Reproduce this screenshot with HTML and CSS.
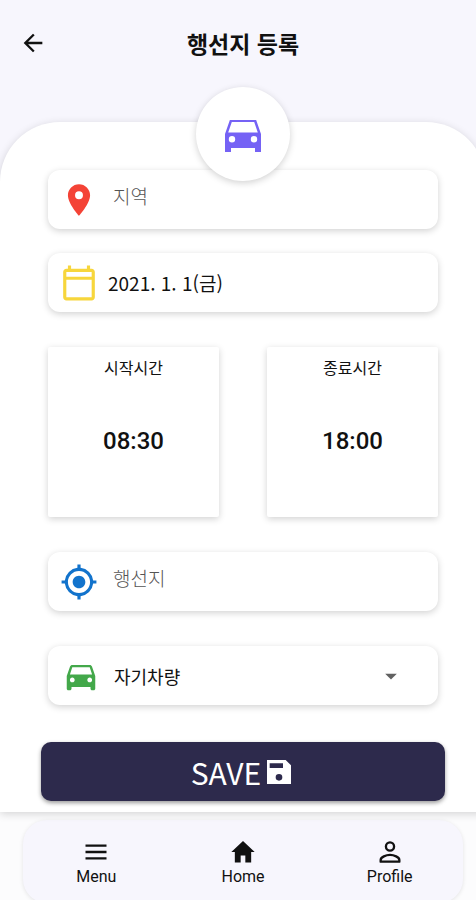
FILE: index.html
```html
<!DOCTYPE html>
<html lang="ko">
<head>
<meta charset="utf-8">
<meta name="viewport" content="width=device-width, initial-scale=1">
<title>행선지 등록</title>
<link rel="stylesheet" href="styles.css">
</head>
<body>
<div class="app">
  <div class="screen">
    <header class="topbar">
      <button class="back" type="button" aria-label="Back">
        <svg class="icon icon-sm" viewBox="0 0 24 24"><path d="M20 11H7.83l5.59-5.59L12 4l-8 8 8 8 1.41-1.41L7.83 13H20v-2z"/></svg>
      </button>
      <h1 class="title">행선지 등록</h1>
    </header>

    <main class="sheet">
      <div class="badge">
        <svg class="icon icon-xl" viewBox="0 0 24 24"><path fill-rule="evenodd" d="M18.58 5H5.43L3 12v9h3v-2h12v2h3v-9l-2.42-7zM6.5 16.2a1.6 1.6 0 1 1 0-3.2 1.6 1.6 0 0 1 0 3.2zm11 0a1.6 1.6 0 1 1 0-3.2 1.6 1.6 0 0 1 0 3.2zM4.600 11.300L6.400 6h11.200l1.800 5.300z"/></svg>
      </div>
      <form class="form">
        <div class="pair">
          <label class="card field">
            <svg class="icon icon-lg red" viewBox="0 0 24 24"><path d="M12 2C8.13 2 5 5.13 5 9c0 5.25 7 13 7 13s7-7.75 7-13c0-3.87-3.13-7-7-7zm0 9.5a2.5 2.5 0 0 1 0-5 2.5 2.5 0 0 1 0 5z"/></svg>
            <input class="text" type="text" placeholder="지역" aria-label="지역">
          </label>
          <button class="card field date" type="button">
            <svg class="icon icon-lg yellow" viewBox="0 0 24 24"><path d="M20 3h-1V1h-2v2H7V1H5v2H4c-1.1 0-2 .9-2 2v16c0 1.1.9 2 2 2h16c1.1 0 2-.9 2-2V5c0-1.1-.9-2-2-2zm0 2v3H4V5h16zM4 21V10h16v11H4z"/></svg>
            <span>2021. 1. 1(금)</span>
          </button>
        </div>

        <div class="times">
          <button class="time" type="button">
            <span class="time-label">시작시간</span>
            <span class="time-value">08:30</span>
          </button>
          <button class="time" type="button">
            <span class="time-label">종료시간</span>
            <span class="time-value">18:00</span>
          </button>
        </div>

        <label class="card field">
          <svg class="icon icon-lg blue" viewBox="0 0 24 24"><path d="M12 8c-2.21 0-4 1.79-4 4s1.79 4 4 4 4-1.79 4-4-1.79-4-4-4zm8.94 3A8.99 8.99 0 0 0 13 3.06V1h-2v2.06A8.99 8.99 0 0 0 3.06 11H1v2h2.06A8.99 8.99 0 0 0 11 20.94V23h2v-2.06A8.99 8.99 0 0 0 20.94 13H23v-2h-2.06zM12 19c-3.87 0-7-3.13-7-7s3.13-7 7-7 7 3.13 7 7-3.13 7-7 7z"/></svg>
          <input class="text" type="text" placeholder="행선지" aria-label="행선지">
        </label>

        <label class="card field vehicle">
          <svg class="icon icon-lg green" viewBox="0 0 24 24"><path d="M18.92 6.01C18.72 5.42 18.16 5 17.5 5h-11c-.66 0-1.21.42-1.42 1.01L3 12v8c0 .55.45 1 1 1h1c.55 0 1-.45 1-1v-1h12v1c0 .55.45 1 1 1h1c.55 0 1-.45 1-1v-8l-2.08-5.99zM6.5 16c-.83 0-1.5-.67-1.5-1.5S5.67 13 6.5 13s1.5.67 1.5 1.5S7.33 16 6.5 16zm11 0c-.83 0-1.5-.67-1.5-1.5s.67-1.5 1.5-1.5 1.5.67 1.5 1.5-.67 1.5-1.5 1.5zM5 11l1.5-4.5h11L19 11H5z"/></svg>
          <select class="select" aria-label="차량">
            <option>자기차량</option>
          </select>
          <svg class="icon icon-sm grey" viewBox="0 0 24 24"><path d="M7 10l5 5 5-5z"/></svg>
        </label>

        <button class="save" type="button">
          <span>SAVE</span>
          <svg class="icon icon-md" viewBox="0 0 24 24"><path d="M17 3H3v18h18V7l-4-4zm-5 15.500a2.500 2.500 0 1 1 0-5 2.500 2.500 0 0 1 0 5zM15 9H5V5.500h10V9z"/></svg>
        </button>
      </form>
    </main>

    <nav class="nav">
      <a class="nav-item" href="#menu">
        <svg class="icon icon-sm" viewBox="0 0 24 24"><path d="M3 18.500h18v-2H3v2zm0-5.500h18v-2H3v2zm0-7.500v2h18v-2H3z"/></svg>
        <span>Menu</span>
      </a>
      <a class="nav-item" href="#home">
        <svg class="icon icon-sm" viewBox="0 0 24 24"><path d="M10 21v-6h4v6h5v-9h3L12 2.5 2 12h3v9z"/></svg>
        <span>Home</span>
      </a>
      <a class="nav-item" href="#profile">
        <svg class="icon icon-sm" viewBox="0 0 24 24"><path fill="none" stroke="currentColor" stroke-width="2" stroke-linejoin="round" d="M12 3.800a3.500 3.500 0 1 1 0 7 3.500 3.500 0 0 1 0-7zM4 20.300v-1.500c0-2.500 4.700-4.300 8-4.300s8 1.800 8 4.300v1.500z"/></svg>
        <span>Profile</span>
      </a>
    </nav>
  </div>
</div>
</body>
</html>
```
FILE: styles.css
```css
* {
  box-sizing: border-box;
}

body {
  margin: 0;
  background: #fcfcfd;
  color: #111;
  font-family: "Noto Sans CJK KR", sans-serif;
}

button,
input,
select {
  margin: 0;
  padding: 0;
  border: 0;
  background: none;
  color: inherit;
  font: inherit;
}

/* The screen runs slightly past the right edge of the window. */
.app {
  height: 100vh;
  overflow: hidden;
}

.screen {
  margin-right: -10px;
  background: linear-gradient(#f7f6fd 300px, transparent 300px);
}

.icon {
  display: block;
  flex: none;
  fill: currentColor;
}

.icon-sm { width: 28px; height: 28px; }
.icon-md { width: 32px; height: 32px; }
.icon-lg { width: 38px; height: 38px; }
.icon-xl { width: 48px; height: 48px; }

.red { color: #f44336; }
.yellow { color: #f7d63c; }
.blue { color: #1273cc; }
.green { color: #43a84a; }
.grey { color: #616161; }

.topbar {
  display: grid;
  grid-template-columns: 28px 1fr 28px;
  align-items: center;
  height: 122px;
  padding: 0 19px 36px;
}

.title {
  margin: 0;
  font-size: 23px;
  font-weight: 700;
  line-height: 32px;
  text-align: center;
}

.sheet {
  position: relative;
  padding: 48px 48px 11px;
  border-radius: 60px 60px 0 0;
  background: #fff;
  box-shadow: 0 2px 8px rgba(0, 0, 0, 0.16);
}

.badge {
  position: absolute;
  top: -35px;
  left: 50%;
  display: grid;
  place-items: center;
  width: 94px;
  height: 94px;
  margin-left: -47px;
  border-radius: 50%;
  background: #fff;
  box-shadow: 0 2px 7px rgba(0, 0, 0, 0.18);
  color: #7562f5;
}

.form,
.pair {
  display: flex;
  flex-direction: column;
}

.form { gap: 35px; }
.pair { gap: 24px; }

.card {
  height: 59px;
  border-radius: 12px;
  background: #fff;
  box-shadow: 0 2px 7px rgba(0, 0, 0, 0.18);
}

.field {
  display: flex;
  align-items: center;
  gap: 15px;
  padding: 0 12px;
  font-size: 19px;
  line-height: 28px;
}

.date {
  gap: 10px;
  text-align: left;
}

.text {
  flex: 1;
  min-width: 0;
  height: 36px;
  margin-bottom: 8px;
  outline: 0;
  font-weight: 300;
}

.text::placeholder {
  color: #555;
  opacity: 1;
}

.vehicle {
  gap: 14px;
  padding: 0 33px 0 14px;
  font-size: 18px;
}

.select {
  flex: 1;
  min-width: 0;
  appearance: none;
  outline: 0;
}

.times {
  display: grid;
  grid-template-columns: 1fr 1fr;
  gap: 48px;
}

.time {
  display: flex;
  flex-direction: column;
  align-items: center;
  gap: 44px;
  height: 170px;
  padding-top: 8px;
  border-radius: 2px;
  background: #fff;
  box-shadow: 0 2px 7px rgba(0, 0, 0, 0.18);
}

.time-label {
  font-size: 16px;
  line-height: 24px;
}

.time-value {
  font-family: Roboto, sans-serif;
  font-size: 24px;
  font-weight: 500;
  line-height: 36px;
}

.save {
  display: flex;
  align-items: center;
  justify-content: center;
  gap: 2px;
  height: 59px;
  margin: 2px -7px 0;
  border-radius: 10px;
  background: #2d2a4c;
  box-shadow: 0 2px 4px rgba(0, 0, 0, 0.4);
  color: #fff;
  font-size: 30px;
  line-height: 40px;
}

.nav {
  display: flex;
  margin: 8px 23px 0;
  padding: 18px 0 16px;
  border-radius: 24px;
  background: #f7f6fd;
  box-shadow: 0 1px 4px rgba(0, 0, 0, 0.1);
}

.nav-item {
  display: flex;
  flex: 1;
  flex-direction: column;
  align-items: center;
  gap: 1px;
  color: #111;
  font-family: Roboto, sans-serif;
  font-size: 16px;
  line-height: 20px;
  text-decoration: none;
}
```
